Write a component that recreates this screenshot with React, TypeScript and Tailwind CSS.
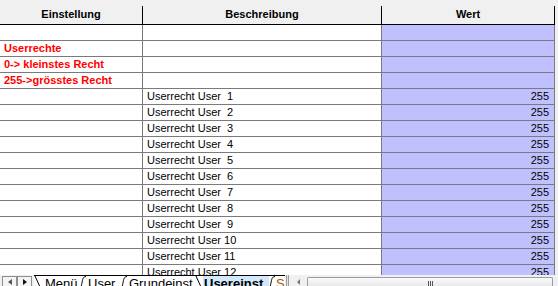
import React from "react";

const userRows = Array.from({ length: 12 }, (_, i) => i + 1);

function Slash() {
  return (
    <svg width="8" height="11" viewBox="0 0 8 11" className="shrink-0">
      <path d="M1 0 L6 11" stroke="#000" strokeWidth="1" fill="none" />
    </svg>
  );
}

function Curve() {
  return (
    <svg width="7" height="11" viewBox="0 0 7 11" className="shrink-0">
      <path d="M6 0.5 C2 1 3 4 1 11" stroke="#000" strokeWidth="1" fill="none" />
    </svg>
  );
}

export default function App() {
  return (
    <div className="flex h-[286px] w-[558px] flex-col overflow-hidden bg-[#f0f0f0] font-['Liberation_Sans',Arial,sans-serif] text-[11px] text-black">
      {/* Sheet area */}

      <div className="flex-1 overflow-hidden pt-[6px]">
        <div className="w-[555px]">
          {/* Header */}

          <div className="grid h-[19px] grid-cols-[143px_239px_173px] font-bold">
            <div className="flex items-center justify-center border-b border-r border-black pb-[1px]">
              Einstellung
            </div>
            <div className="flex items-center justify-center border-b border-r border-black pb-[1px]">
              Beschreibung
            </div>
            <div className="flex items-center justify-center border-b border-r border-black pb-[1px]">
              Wert
            </div>
          </div>

          {/* Settings rows */}

          {["", "Userrechte", "0-> kleinstes Recht", "255->grösstes Recht"].map((t, i) => (
            <div key={i} className="grid h-[16px] grid-cols-[143px_239px_173px] leading-[15px]">
              <div className="border-b border-r border-[#7a7a7a] bg-white pl-[4px] font-bold text-[#ff0000]">
                {t}
              </div>
              <div className="border-b border-r border-[#7a7a7a] bg-white" />
              <div className="border-b border-r border-[#7a7a7a] bg-[#c0c0ff]" />
            </div>
          ))}

          {/* User rows */}

          {userRows.map((n) => (
            <div key={n} className="grid h-[16px] grid-cols-[143px_239px_173px] leading-[15px]">
              <div className="border-b border-r border-[#7a7a7a] bg-white" />
              <div className="whitespace-pre border-b border-r border-[#7a7a7a] bg-white pl-[4px]">
                {n < 10 ? `Userrecht User  ${n}` : `Userrecht User ${n}`}
              </div>
              <div className="border-b border-r border-[#7a7a7a] bg-[#c0c0ff] pr-[5px] text-right">
                255
              </div>
            </div>
          ))}
        </div>
      </div>

      {/* Sheet tabs + scrollbar */}

      <div className="flex h-[11px] items-start overflow-hidden bg-[#f0f0f0] text-[13px] leading-[15px]">
        <div className="ml-[2px] mt-[1px] flex h-[10px] w-[15px] shrink-0 items-center justify-center border border-b-0 border-[#8f8f8f] bg-[#f4f4f4]">
          <span className="h-0 w-0 border-y-[3px] border-r-[4px] border-y-transparent border-r-[#555]" />
        </div>
        <div className="mt-[1px] flex h-[10px] w-[15px] shrink-0 items-center justify-center border border-b-0 border-[#8f8f8f] bg-[#f4f4f4]">
          <span className="h-0 w-0 border-y-[3px] border-l-[4px] border-y-transparent border-l-[#111]" />
        </div>

        <div className="ml-[2px] flex h-[11px] shrink-0 items-start overflow-hidden border-t border-black bg-white">
          <Slash />
          <span className="w-[38px] shrink-0 whitespace-nowrap pl-[3px]">Menü</span>
          <Curve />
          <span className="w-[34px] shrink-0 whitespace-nowrap pl-[1px]">User</span>
          <Curve />
          <span className="w-[67px] shrink-0 whitespace-nowrap pl-[1px]">Grundeinst</span>
          <Slash />
          <span className="w-[66px] shrink-0 whitespace-nowrap bg-[#d4e8fc] pl-[1px] font-bold">Usereinst</span>
          <Curve />
          <span className="w-[9px] shrink-0 overflow-hidden text-[#b05a00]">S</span>
        </div>

        <div className="ml-[1px] h-[11px] w-[3px] shrink-0 border-x border-[#9a9a9a] bg-[#e4e4e4]" />

        <div className="ml-[4px] mt-[4px] flex w-[10px] shrink-0 justify-center">
          <span className="h-0 w-0 border-y-[3px] border-r-[3px] border-y-transparent border-r-[#777]" />
        </div>

        <div className="ml-[4px] mt-[2px] flex h-[10px] w-[246px] shrink-0 justify-center rounded-t-[2px] border border-b-0 border-[#9c9c9c] bg-gradient-to-b from-[#fbfbfb] to-[#e6e6e6] pt-[3px]">
          <div className="flex gap-[1px]">
            <span className="h-[6px] w-[1px] bg-[#555]" />
            <span className="h-[6px] w-[1px] bg-[#555]" />
            <span className="h-[6px] w-[1px] bg-[#555]" />
          </div>
        </div>
      </div>
    </div>
  );
}
